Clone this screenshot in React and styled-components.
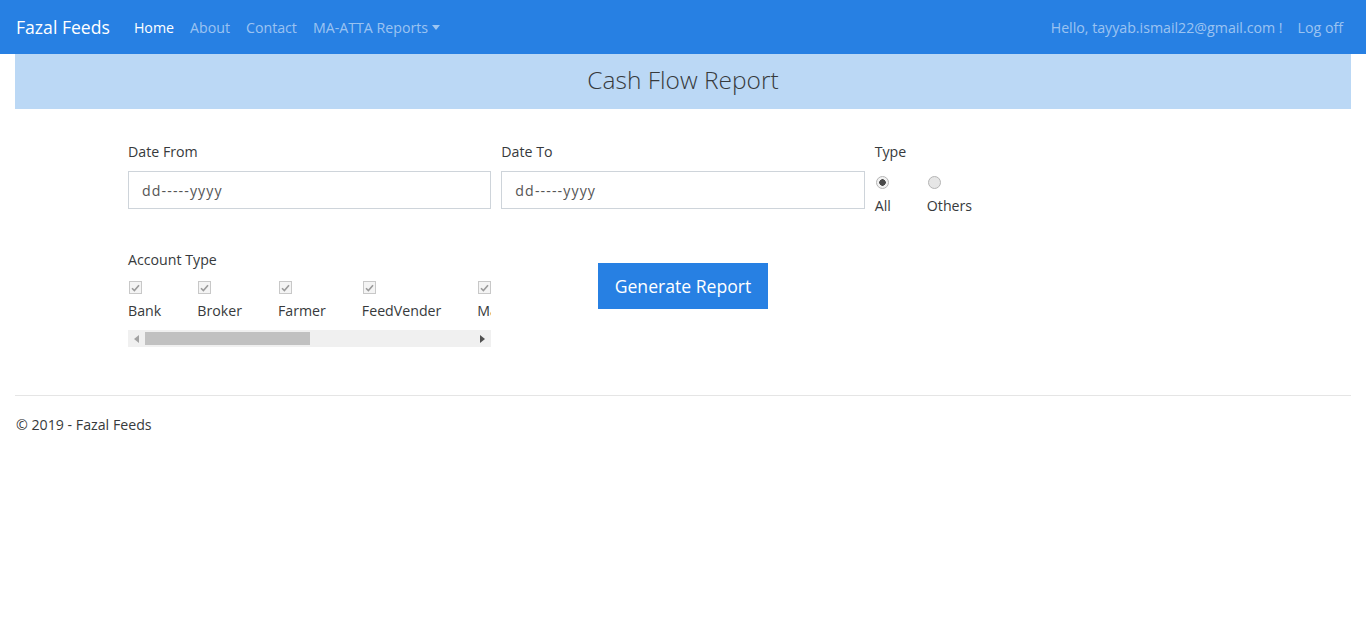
import React from "react";
import styled, { createGlobalStyle } from "styled-components";

const GlobalStyle = createGlobalStyle`
  * { box-sizing: border-box; }
  body {
    margin: 0;
    font-family: "Open Sans", "Noto Sans", sans-serif;
    font-size: 14.2px;
    color: #373a3c;
    background: #fff;
  }
`;

const accountTypes = ["Bank", "Broker", "Farmer", "FeedVender", "Market"];

const App = () => {
    return (
        <div>
            <GlobalStyle />
            <NavBar>
                <NavLeft>
                    <Brand>Fazal Feeds</Brand>
                    <NavLink active>Home</NavLink>
                    <NavLink>About</NavLink>
                    <NavLink>Contact</NavLink>
                    <NavLink>MA-ATTA Reports<Caret /></NavLink>
                </NavLeft>
                <NavRight>
                    <NavLink>Hello, tayyab.ismail22@gmail.com !</NavLink>
                    <NavLink>Log off</NavLink>
                </NavRight>
            </NavBar>

            <Body>
                <Banner>Cash Flow Report</Banner>

                <Container>
                    <FormRow>
                        <Col>
                            <Label>Date From</Label>
                            <DateBox>dd-----yyyy</DateBox>
                        </Col>
                        <Col>
                            <Label>Date To</Label>
                            <DateBox>dd-----yyyy</DateBox>
                        </Col>
                        <Col>
                            <Label>Type</Label>
                            <OptionRow>
                                <Option>
                                    <Radio checked />
                                    <OptionText>All</OptionText>
                                </Option>
                                <Option>
                                    <Radio />
                                    <OptionText>Others</OptionText>
                                </Option>
                            </OptionRow>
                        </Col>
                    </FormRow>

                    <FormRow second>
                        <Col>
                            <Label>Account Type</Label>
                            <ClipBox>
                                <OptionRow>
                                    {accountTypes.map((t) => (
                                        <Option key={t}>
                                            <CheckBox>
                                                <svg width="9" height="8" viewBox="0 0 9 8">
                                                    <path d="M1 4.2 L3.4 6.6 L8 1.2" fill="none" stroke="#9a9a9a" strokeWidth="1.6" />
                                                </svg>
                                            </CheckBox>
                                            <OptionText>{t}</OptionText>
                                        </Option>
                                    ))}
                                </OptionRow>
                            </ClipBox>
                            <ScrollTrack>
                                <ArrowButton>
                                    <svg width="5" height="8" viewBox="0 0 5 8"><path d="M5 0 L0 4 L5 8 Z" fill="#a3a3a3" /></svg>
                                </ArrowButton>
                                <ThumbArea>
                                    <Thumb />
                                </ThumbArea>
                                <ArrowButton>
                                    <svg width="5" height="8" viewBox="0 0 5 8"><path d="M0 0 L5 4 L0 8 Z" fill="#505050" /></svg>
                                </ArrowButton>
                            </ScrollTrack>
                        </Col>
                        <ButtonCol>
                            <Button>Generate Report</Button>
                        </ButtonCol>
                    </FormRow>
                </Container>

                <Rule />
                <Footer>© 2019 - Fazal Feeds</Footer>
            </Body>
        </div>
    )
}

const NavBar = styled.div`
height: 54px;
background-color: #2780e3;
display: flex;
align-items: center;
justify-content: space-between;
padding: 0 16px;
`

const NavLeft = styled.div`
display: flex;
align-items: center;
gap: 16px;
`

const NavRight = styled.div`
display: flex;
align-items: center;
gap: 15px;
margin-right: 7px;
`

const Brand = styled.div`
color: #fff;
font-size: 17.6px;
margin-right: 8px;
`

const NavLink = styled.div`
color: ${(p) => (p.active ? "#fff" : "rgba(255,255,255,0.55)")};
font-size: 14.2px;
display: flex;
align-items: center;
`

const Caret = styled.span`
display: inline-block;
margin-left: 4px;
border-top: 5px solid rgba(255,255,255,0.55);
border-left: 4px solid transparent;
border-right: 4px solid transparent;
`

const Body = styled.div`
padding: 0 15px;
`

const Banner = styled.div`
height: 55px;
padding-bottom: 5px;
background-color: #bbd8f5;
display: flex;
align-items: center;
justify-content: center;
font-size: 24.5px;
font-weight: 300;
color: #373a3c;
`

const Container = styled.div`
width: 1110px;
margin: 0 auto;
padding-top: 31px;
`

const FormRow = styled.div`
display: grid;
grid-template-columns: repeat(3, 363.33px);
column-gap: 10px;
margin-top: ${(p) => (p.second ? "31px" : "0")};
`

const Col = styled.div`
display: flex;
flex-direction: column;
min-width: 0;
`

const ButtonCol = styled.div`
display: flex;
justify-content: center;
align-items: flex-start;
padding-top: 15px;
`

const Label = styled.div`
line-height: 22px;
padding-top: 1px;
margin-bottom: 8px;
`

const DateBox = styled.div`
height: 38px;
border: 1px solid #ced4da;
padding: 0 13px;
display: flex;
align-items: center;
color: #555;
letter-spacing: 1.1px;
`

const OptionRow = styled.div`
display: flex;
gap: 36px;
width: max-content;
`

const Option = styled.div`
display: flex;
flex-direction: column;
align-items: flex-start;
`

const Radio = styled.span`
width: 13px;
height: 13px;
margin: 5px 0 0 1px;
border-radius: 50%;
border: 1px solid #b5b5b5;
background: ${(p) => (p.checked ? "radial-gradient(circle, #4a4a4a 0 3px, #f2f2f2 3.5px)" : "#e6e6e6")};
`

const CheckBox = styled.span`
width: 13px;
height: 13px;
margin: 2px 0 0 1px;
border: 1px solid #c8c8c8;
background: #f4f4f4;
display: flex;
align-items: center;
justify-content: center;
`

const OptionText = styled.div`
margin-top: 6px;
line-height: 22px;
`

const ClipBox = styled.div`
width: 363px;
overflow: hidden;
padding-bottom: 8px;
`

const ScrollTrack = styled.div`
width: 363px;
height: 17px;
background: #f0f0f0;
display: flex;
`

const ArrowButton = styled.div`
width: 17px;
height: 17px;
display: flex;
align-items: center;
justify-content: center;
`

const ThumbArea = styled.div`
flex: 1;
display: flex;
align-items: center;
`

const Thumb = styled.div`
width: 165px;
height: 13px;
background: #c1c1c1;
`

const Button = styled.div`
background-color: #2780e3;
color: #fff;
font-size: 17.6px;
padding: 0 17px;
height: 46px;
display: flex;
align-items: center;
`

const Rule = styled.div`
margin-top: 48px;
border-top: 1px solid #e5e5e5;
`

const Footer = styled.div`
padding-top: 18px;
padding-left: 1px;
line-height: 22px;
`

export default App
